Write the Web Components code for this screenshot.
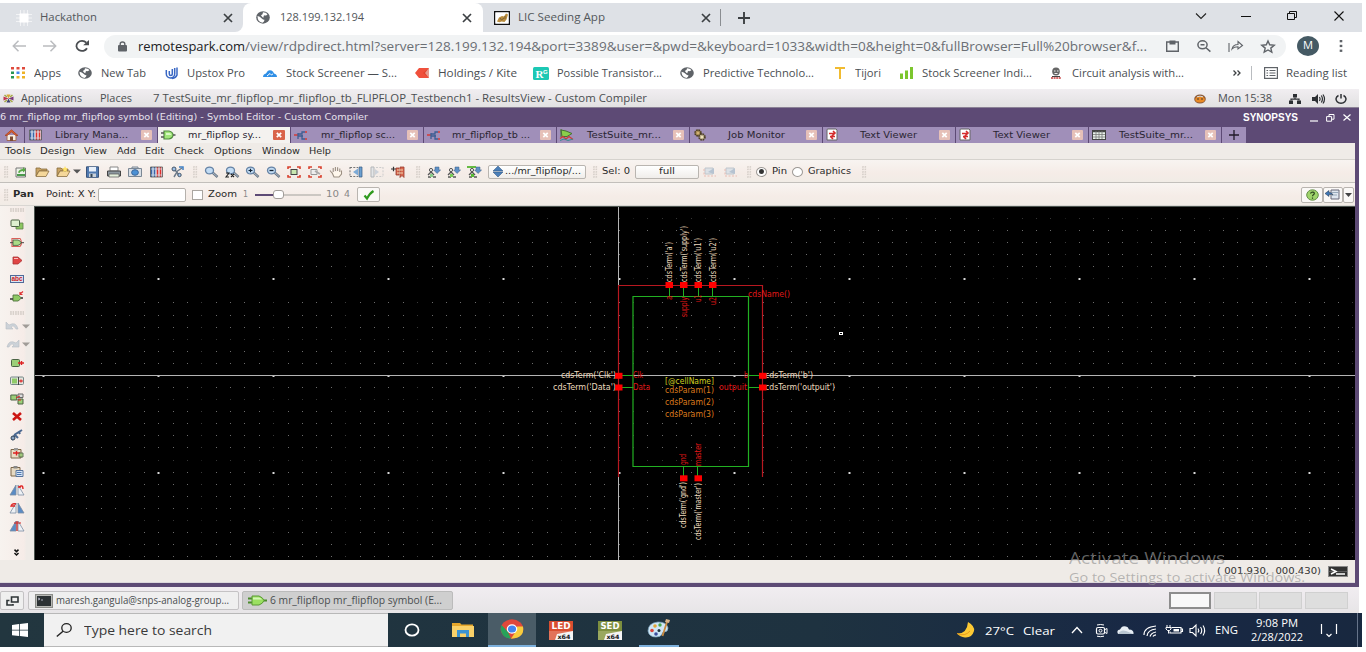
<!DOCTYPE html>
<html lang="en">
<head>
<meta charset="utf-8">
<title>Symbol Editor - Custom Compiler</title>
<style>
html,body{margin:0;padding:0;background:#fff;overflow:hidden}
body{font-family:"Open Sans","Noto Sans",sans-serif}
</style>
</head>
<body>
<remote-desktop></remote-desktop>
<script>
const define = (name, css, html, after) => customElements.define(name, class extends HTMLElement {
  constructor(){ super(); this.attachShadow({mode:'open'}); }
  connectedCallback(){
    this.shadowRoot.innerHTML = `<style>:host{box-sizing:border-box}*{box-sizing:border-box}${css}</style>` + (typeof html === 'function' ? html(this) : html);
    if (after) after(this);
  }
});

/* ---------- icon set ---------- */
const lens = (sign) => `<path d="M8.500 6.500l5 4.500" stroke="#6b7683" stroke-width="2.400"/><path d="M8.500 6.500l4.600 4" stroke="#a9b9ca" stroke-width="1"/><ellipse cx="5.500" cy="4.500" rx="4" ry="3.400" fill="#c3dcf4" stroke="#6683a5" stroke-width="1.300"/>${sign}`;
const scope = (c) => `<path d="M2 9l3-3 3 3M5 6V3M2 11h3M7 11h3" stroke="#555" fill="none" stroke-width="1.300"/><circle cx="5" cy="4" r="1.600" fill="#eee" stroke="#555"/><path d="M4 8h3v3H4z" fill="${c}"/><path d="M9 1h4v3h1.600L11 7.500 7.600 4H9z" fill="#5f90c4" stroke="#3d6088" stroke-width=".5"/>`;
const corners = '<path d="M1 3V1h3M10 1h3v2M13 9v2h-3M4 11H1V9" stroke="#d9412f" stroke-width="1.600" fill="none"/>';
const gate = '<path d="M3 2h5q4 1 4 4t-4 4H3z" fill="#a2e67a" stroke="#4f8a3e" stroke-width="1.200"/><path d="M5 4h3.500q1.500.5 2 2H5z" fill="#d8f8c4"/><path d="M0 4h3M0 8h3M12 6h2.500" stroke="#555" stroke-width="1.300"/>';
const lib = '<rect x="1" y="1" width="12" height="10" fill="#e6eef7"/><path d="M2.500 1v10M5.500 1v10" stroke="#3a66a8" stroke-width="1.700"/><path d="M8.500 1v10M11.500 1v10" stroke="#e0302c" stroke-width="1.700"/><path d="M1 3h12M1 9h12" stroke="#ccd4de" stroke-width=".8"/><path d="M1.500 1h12v10h-12z" fill="none" stroke="#555" stroke-width=".8"/>';
const schem = '<path d="M0 5h4M11 2h2M11 9h2" stroke="#d33b36" stroke-width="1.600"/><path d="M4 3v6M4 4h4V2h3M8 5v4h3M4 6h5" stroke="#3d5f93" fill="none" stroke-width="1.300"/>';
const textdoc = '<path d="M1 1q0-1 1-1h8l1 1v10H1z" fill="#fff" stroke="#666"/><path d="M7 2l2 2-4 4 2 2M3 4.500h6M4 7.500h5" stroke="#d42c2c" stroke-width="1.600" fill="none"/>';
const folder = (p) => `<path d="M1 2h4l1 1h6v2H4L1 10z" fill="#c9a365" stroke="#86693a" stroke-width=".8"/><path d="M1 10.500L4 5h10l-3 5.500z" fill="#f5d79a" stroke="#8b7044" stroke-width=".8"/>${p}`;
const globe = '<circle cx="7" cy="7" r="6.800" fill="#5f6368"/><path d="M1.500 5.500Q4 6 5.500 8t3 1.500q0 2-2 3.200Q1.500 12 1.500 5.500zM7 1.400q3 0 4.500 2.200-1 1.600-2.500 1.200T7.500 6.500 5 5q0-1 1.500-1.600z" fill="#fff"/>';
const box = (c, s) => `<rect x="1.500" y="2.500" width="8" height="7" rx="1" fill="#9ccf78" stroke="#4c6345"/>${s}`;
const tri = (f, a) => `<path d="M6 1v10H0z" fill="${f[0]}" stroke="#7b8ea2" stroke-width=".8"/><path d="M8 1v10h6z" fill="${f[1]}" stroke="#7b8ea2" stroke-width=".8"/>${a}`;
const ICONS = {
 chip:[16,16,'<g fill="#fff"><rect x="3.500" y="3.500" width="9" height="9"/><path d="M4 0h1v16H4zM7.500 0h1v16h-1zM11 0h1v16h-1zM0 4h16v1H0zM0 7.500h16v1H0zM0 11h16v1H0z" opacity=".6"/></g>'],
 globe:[14,12,`<g transform="scale(1 .857)">${globe}</g>`],
 tglobe:[14,13,`<g transform="scale(1 .92)">${globe}</g>`],
 cat:[16,14,'<path d="M.7 0v13.300H16M0 .7h16M15.300 0v13" stroke="#111" stroke-width="1.400"/><path d="M1.400 1.400h13.200v11.200H1.400z" fill="#fff"/><path d="M3 10.500l2-4 3-1.500 2 .5 2-3 2 1-1.500 5-2 2.500-3-.5-2 .8z" fill="#b98c3c"/><path d="M6 7l1.500 2L10 7M11 5v3" stroke="#7b6136" fill="none"/>'],
 x:[10,10,'<path d="M1 1l8 8M9 1L1 9" stroke="#3c4043" stroke-width="1.700"/>'],
 thinx:[10,10,'<path d="M.5 .5l9 9M9.500 .5l-9 9" stroke="#111" stroke-width="1.100"/>'],
 plus:[12,12,'<path d="M6 0v12M0 6h12" stroke="#3c4043" stroke-width="1.900"/>'],
 down:[12,8,'<path d="M1 1.500L6 6.500 11 1.500" stroke="#222" fill="none" stroke-width="1.100"/>'],
 min:[10,10,'<path d="M0 5.500h10" stroke="#111" stroke-width="1"/>'],
 restore:[11,9,'<path d="M.5 2.500h7v6h-7zM2.500 2.500v-2h7v6h-2" stroke="#111" fill="none"/>'],
 back:[14,12,'<path d="M14 6H1.500M6.500 .8L1.300 6l5.200 5.200" stroke="#babcbf" fill="none" stroke-width="1.500"/>'],
 fwd:[14,12,'<path d="M0 6h12.500M7.500 .8L12.700 6l-5.200 5.200" stroke="#babcbf" fill="none" stroke-width="1.500"/>'],
 reload:[14,12,'<path d="M12 8.200A5.600 5 0 1 1 11.300 2.700" stroke="#4a4d51" fill="none" stroke-width="1.800"/><path d="M14 0v5.200H8.200z" fill="#4a4d51"/>'],
 lock:[9,11,'<rect y="4" width="9" height="6.500" rx="1" fill="#5f6368"/><path d="M2.200 5V3a2.300 2 0 0 1 4.600 0v2" stroke="#5f6368" fill="none" stroke-width="1.400"/>'],
 clip:[13,12,'<path d="M.7 2h11.600v9.300H.7z" stroke="#5f6368" fill="none" stroke-width="1.400"/><path d="M3.500 .5h6v4h-6z" fill="#5f6368"/>'],
 zoomout:[14,12,'<ellipse cx="5.500" cy="4.800" rx="4.600" ry="4" stroke="#5f6368" fill="none" stroke-width="1.500"/><path d="M9 7.800l4.400 3.800M3.500 4.800h4" stroke="#5f6368" stroke-width="1.500"/>'],
 share:[16,12,'<path d="M1 3v9M4 9Q5 4.500 10 4.500V1.500L14.500 5.500 10 9V6.800Q6 6.800 4 9z" stroke="#5f6368" fill="none" stroke-width="1.100"/>'],
 star:[14,13,'<path d="M7 1l1.700 3.800 4.500.4-3.400 2.900 1 4L7 10l-3.800 2.100 1-4L.8 5.200l4.500-.4z" stroke="#5f6368" fill="none" stroke-width="1.400"/>'],
 dots:[4,12,'<g fill="#5f6368"><rect x=".7" y="0" width="2.600" height="2.300"/><rect x=".7" y="4.800" width="2.600" height="2.300"/><rect x=".7" y="9.600" width="2.600" height="2.300"/></g>'],
 apps:[14,12,'<path d="M0 0h3v2.500H0zM5.500 0h3v2.500h-3zM11 0h3v2.500h-3z" fill="#df4a3c"/><path d="M0 4.500h3V7H0zM0 9h3v2.500H0z" fill="#2a9553"/><path d="M5.500 4.500h3V7h-3z" fill="#4387ec"/><path d="M11 4.500h3V7h-3zM5.500 9h3v2.500h-3zM11 9h3v2.500h-3z" fill="#eeb326"/>'],
 upstox:[13,12,'<path d="M1.300 3v3.800a4.200 4.200 0 0 0 8.400 0V1M4.300 4v3a1.500 1.500 0 0 0 3 0V2M12 .5v7.500Q11 11 7 11.500" stroke="#3a68c4" fill="none" stroke-width="1.500"/>'],
 bluecloud:[14,9,'<path d="M0 8Q0 5 3 4.500 5 0 8.500 1.500q2 1 2.500 3 3 .5 3 3.500z" fill="#2f8fe6"/><path d="M4 7l3-2.500L8.500 6 10 4.800" stroke="#fff" fill="none"/>'],
 kite:[14,10,'<path d="M4 0h10l-4 5 4 5H4L0 5z" fill="#f0503c"/><path d="M14 0L8 5l6 5" fill="#d13a22" opacity=".5"/>'],
 rg:[16,13,'<rect width="16" height="13" rx="1.500" fill="#1cc8b4"/><text x="2.500" y="11" font-family="Liberation Serif" font-weight="700" font-size="11" fill="#fff">R</text><text x="10" y="6.500" font-family="Liberation Sans" font-weight="700" font-size="6" fill="#fff">G</text>'],
 tj:[10,12,'<path d="M0 0h10v2H6v10H4V2H0z" fill="#f1bb30"/>'],
 bars:[13,12,'<path d="M0 6.500h3V12H0zM5 3.500h3V12H5zM10 0h3v12h-3z" fill="#7cc62e"/>'],
 person:[10,12,'<ellipse cx="5" cy="4.500" rx="3.800" ry="4" fill="#666"/><path d="M3 4h1.500M6 4h1.500M3.500 6.500h3" stroke="#eee"/><path d="M1 9h8v1H1z" fill="#444"/><path d="M0 11h10" stroke="#c63a3a" stroke-width="1.300" stroke-dasharray="2 .6"/>'],
 list:[14,12,'<rect x=".6" y=".6" width="12.800" height="10.800" fill="none" stroke="#5f6368" stroke-width="1.200"/><path d="M2.500 3.500h1.600M2.500 6h1.600M2.500 8.500h1.600M5.500 3.500h6M5.500 6h6M5.500 8.500h6" stroke="#5f6368" stroke-width="1.200"/>'],
 centos:[11,9,'<path d="M5.500 4.500L3.500 .5h4z" fill="#d8a530"/><path d="M5.500 4.500l2 4h-4z" fill="#3c3f6e"/><path d="M5.500 4.500l5-2v4z" fill="#7a3a7c"/><path d="M5.500 4.500l-5-2v4z" fill="#c0354d"/><path d="M1.500 1L4 3M9.500 1L7 3M1.500 8L4 6M9.500 8L7 6" stroke="#a3a845" stroke-width="1.600"/>'],
 orange:[12,10,'<ellipse cx="6" cy="5" rx="5.800" ry="4.600" fill="#8a5b3a"/><ellipse cx="6" cy="5.600" rx="4.800" ry="3" fill="#e98925"/><path d="M3 2.800Q6 1.500 9 2.800" stroke="#ddd"/><circle cx="4" cy="5" r=".8" fill="#333"/><circle cx="8" cy="5" r=".8" fill="#333"/>'],
 net:[12,10,'<path d="M4 0h4v3.500H4zM0 6.500h4V10H0zM8 6.500h4V10H8z" fill="#2c2f33"/><path d="M6 3.500v2M2 6.500V5.200h8v1.300" stroke="#2c2f33" fill="none" stroke-width="1.200"/>'],
 vol:[13,10,'<path d="M0 3h3l3-3v10L3 7H0z" fill="#2c2f33"/><path d="M7.500 3q1.300 2 0 4M9.300 1.500q2.300 3.500 0 7M11 .5q3 4.500 0 9" stroke="#2c2f33" fill="none" stroke-width="1.200"/>'],
 power:[12,10,'<path d="M3.500 1.500a5 4.200 0 1 0 5 0M6 0v4.500" stroke="#2c2f33" fill="none" stroke-width="1.500"/>'],
 wmin:[8,8,'<path d="M0 7h8" stroke="#fff" stroke-width="1.200"/>'],
 wres:[9,8,'<path d="M.6 2.600h5v4.600h-5zM3 2.500v-2h5v4.700H5.600" stroke="#fff" fill="none" stroke-width="1"/>'],
 wx:[8,7,'<path d="M.5 .5l7 6M7.500 .5l-7 6" stroke="#fff" stroke-width="1.200"/>'],
 home:[13,12,'<path d="M2 6v5.500h9V6" fill="#f6ece0" stroke="#a06a52"/><path d="M0 6.500L6.500 .8 13 6.500h-2L6.500 3 2 6.500z" fill="#e0602f" stroke="#a03f20" stroke-width=".7"/><path d="M5 7.500h3V12H5z" fill="#7d4b32"/>'],
 lib:[14,12,lib], gate:[15,12,gate], schem:[14,11,schem], textdoc:[12,12,textdoc],
 wave:[14,12,'<path d="M1 0v8M1 1l5 1 6 2.500-5 3H2z" fill="#8ace4a" stroke="#477034"/><path d="M0 9.500l3-2 3 2.500 3-2.500 4 3" stroke="#d13b33" fill="none" stroke-width="1.300"/><path d="M0 11.500l4-1.500 4 1.500 5-1.500" stroke="#3a8a92" fill="none"/>'],
 gears:[14,12,'<circle cx="5" cy="4" r="2.800" fill="#d0b170" stroke="#4c3c1c" stroke-width="2" stroke-dasharray="1.600 .6"/><circle cx="9" cy="8" r="2.800" fill="#efe2bb" stroke="#4e4028" stroke-width="2" stroke-dasharray="1.600 .6"/>'],
 table:[14,10,'<rect x=".5" y=".5" width="13" height="9" fill="#e8f1ea" stroke="#444"/><path d="M.5 1.500h13" stroke="#444" stroke-width="1.500"/><path d="M4 1v8M7 1v8M10 1v8M1 4.500h12M1 7h12" stroke="#777" stroke-width=".8"/>'],
 newdoc:[12,12,'<path d="M1 2h9.500v9H1z" fill="#eef3ea" stroke="#777"/><path d="M2 8h8v2H2z" fill="#4b9a4b"/><path d="M3 6.500Q4 3 8 3V1l3 3-3 2.500V5Q5 5 4.500 7z" fill="#58a845"/>'],
 open:[15,12,folder('')], openz:[15,12,folder('<path d="M9 0l1 2 2 .4-1.500 1.400L11 6 9 5 7.200 6l.4-2.200L6 2.400 8.200 2z" fill="#ffe36a"/>')],
 caret:[8,5,'<path d="M0 .5h8L4 4.500z" fill="#555"/>'], gcaret:[8,5,'<path d="M0 .5h8L4 4.500z" fill="#a09c98"/>'],
 save:[13,12,'<path d="M.5 .8h12v10.500H.5z" fill="#5079b0" stroke="#3a547b"/><path d="M3 1h7v4.500H3z" fill="#e8f0fa"/><path d="M3 7.500h7V11H3z" fill="#c9d1da"/><path d="M4.500 8h2v3h-2z" fill="#345"/>'],
 print:[14,12,'<path d="M3 1h8v4H3z" fill="#fff" stroke="#888"/><path d="M.5 5h13v5H.5z" fill="#8d979f" stroke="#444"/><path d="M2 8h10v3H2z" fill="#e5f0dc" stroke="#555" stroke-width=".7"/>'],
 cam:[14,12,'<path d="M.5 2.500h13v8H.5zM4 1h6v1.500H4z" fill="#d8dee5" stroke="#7b8794"/><ellipse cx="7" cy="6.500" rx="3.400" ry="2.800" fill="#4b90d4" stroke="#3a659a"/>'],
 prop:[14,12,'<path d="M4 11L7 6 3 3M7 6l2 4M6 6l6-4" stroke="#6d7a89" stroke-width="1.500" fill="none"/><circle cx="4" cy="3" r="2" fill="#9dc0e8" stroke="#456"/><circle cx="9.500" cy="9" r="1.700" fill="#9dc0e8" stroke="#456"/><path d="M9 1h4v3" stroke="#3f7fc4" fill="none" stroke-width="1.500"/>'],
 z1:[14,12,lens('')], z2:[14,12,lens('<path d="M1 7h3l-3 4h3M6 8l3 3M9 8l-3 3" stroke="#222" fill="none" stroke-width="1.100"/>')],
 zin:[14,12,lens('<path d="M3.500 4.500h4M5.500 2.800v3.500" stroke="#123" stroke-width="1.200"/>')], zout:[14,12,lens('<path d="M3.500 4.500h4" stroke="#123" stroke-width="1.300"/>')],
 fit:[14,12,corners+'<rect x="4" y="3.500" width="6" height="5" fill="#c9e8b0" stroke="#444"/>'],
 fits:[14,12,corners+'<path d="M3 3.500h6v5H3z" fill="#eee" stroke="#999"/><path d="M7 5l5 3" stroke="#aaa" stroke-width="1.600"/>'],
 hand:[14,12,'<path d="M3 7L1 4.500M4.200 6V2M6.400 5V1M8.600 5V1.200M10.800 6V2.500M3 6.500l2 4.500h5l2.500-3V4.500" stroke="#9b8f82" fill="#fff7ec" stroke-width="1.100"/>'],
 sel:[14,12,'<path d="M1 1.500h8M1 10.500h8M1 1v10" stroke="#777" stroke-dasharray="2 1.300" fill="none"/><path d="M10 1h3v10h-3z" fill="#6b9fd0" stroke="#375a80" stroke-width=".7"/><path d="M4 6l5-3.500v7z" fill="#7daad6"/>'],
 selg:[14,12,'<path d="M1 1h3v10H1z" fill="#e3e5e7" stroke="#b3b6b9"/><path d="M6 1.500h7M6 10.500h7M13 1v10" stroke="#ccc" stroke-dasharray="2 1.300"/><path d="M9 6L5 3v6z" fill="#ccd2da"/>'],
 book:[14,12,'<path d="M0 3h5M2.500 .8v4.500" stroke="#333" stroke-width="1.200"/><path d="M5 2h3v7H5zM9 1h4v10.500l-2-2-2 2z" fill="#d9674e" stroke="#9b3d30" stroke-width=".8"/><path d="M6 4h6M6 7h6" stroke="#f2d4b0"/>'],
 d1:[14,12,scope('#8c8')], d2:[14,12,scope('#7c5')], d3:[14,12,'<path d="M0 1h9" stroke="#6b4" stroke-width="2"/>'+scope('#5b3')],
 updn:[10,11,'<path d="M0 5L5 0l5 5zM0 6l5 5 5-5z" fill="#4a7fb8" stroke="#2a4f7b" stroke-width=".5"/>'],
 ghost:[14,11,'<path d="M2 2h8v6H2z" fill="#dce1e6" stroke="#c0c6cc"/><path d="M5 6l6-4v6z" fill="#b6c3d1"/><path d="M1 10h12M1 3v7" stroke="#e9bcb2" stroke-dasharray="2 1.500"/>'],
 check:[12,12,'<path d="M1.500 6.500l2.500 3Q7 4 10.500 2" stroke="#2f9a1f" fill="none" stroke-width="2.200"/>'],
 help:[13,12,'<ellipse cx="6.500" cy="6" rx="5.800" ry="5.200" fill="#9fd46b" stroke="#66904b"/><path d="M4.500 4.500Q5 3 6.700 3 9 3.300 8 5.200 6.500 6 6.500 7.300M6.500 8.500v1.300" stroke="#27401c" fill="none" stroke-width="1.200"/>'],
 dock:[15,11,'<path d="M6 1h8v9H6z" fill="#dfe6ef" stroke="#667"/><path d="M7 3.500h6M7 6h5" stroke="#9ab"/><path d="M8 6Q7 3 4 3.500V1.500L0 4.500l4 3V5.500Q7 5 8 6z" fill="#3f76b4" stroke="#234" stroke-width=".5"/>'],
 s1:[14,11,'<path d="M6 4h7v6H6z" fill="#8cc661" stroke="#61824f" stroke-width=".8"/><rect x="1" y="1" width="8.500" height="6.500" rx="1" fill="#def0cf" stroke="#4c6345"/>'],
 s2:[14,11,'<path d="M2 1.500h8q3 4 0 8H2z" fill="none" stroke="#d9605a" stroke-width="1.200"/><path d="M0 5.700h3M11 5.700h3" stroke="#444"/><path d="M3 3h5q3 1 3 2.700T8 8.400H3z" stroke="#4c6345" fill="#a9dc86" stroke-width=".9"/>'],
 s3:[12,9,'<path d="M2 1h5l4 3.500L7 8H2z" fill="#e04545" stroke="#a33" stroke-width=".8"/><path d="M3 2.500h4" stroke="#fbb"/>'],
 s4:[14,8,'<rect x=".5" y=".5" width="13" height="7" fill="#dbe6f3" stroke="#4f6a98"/><text x="1.500" y="6.200" font-family="Liberation Sans" font-weight="700" font-size="6.500" fill="#c22">abc</text>'],
 s5:[14,11,'<path d="M3 4h5q3 2 3 3t-3 3H3z" fill="#8fc965" stroke="#51723f" stroke-width=".9"/><path d="M0 8h3M11 7h2" stroke="#333" stroke-width="1.300"/><path d="M9.500 3.500l3.500-3M10 1v2.500h2.500" stroke="#d33" stroke-width="1.200"/>'],
 undo:[13,9,'<path d="M0 0v7h7L5 5q3-2.500 5 2l2 0Q10-1 3 3z" fill="#ccd2d8" stroke="#b7bec5" stroke-width=".6"/>'],
 redo:[13,9,'<path d="M13 0v7H6l2-2Q5 2.500 3 7L1 7Q3-1 10 3z" fill="#ccd2d8" stroke="#b7bec5" stroke-width=".6"/>'],
 move:[14,11,box('','<path d="M8 6h6M11.500 4v4" stroke="#d22" stroke-width="1.400"/>')],
 stretch:[14,11,'<rect x=".5" y="2" width="13" height="7.500" rx="1" fill="#e2e5dd" stroke="#788"/><path d="M2 3.500h5v5H2z" fill="#8fca68"/><path d="M8.500 2v8" stroke="#444"/><path d="M9 6h4M11 4.500v3" stroke="#d22" stroke-width="1.200"/>'],
 copy:[14,12,'<path d="M.8 2h6v5h-6zM8 6h5v5H8z" fill="#9ccf78" stroke="#4c6345"/><path d="M8 1h5v3.500H8z" fill="#ddd" stroke="#666"/><path d="M6 5l4-2M8 7l3 0" stroke="#d22"/>'],
 del:[12,9,'<path d="M2 1l8 7M10 1L2 8" stroke="#cc1512" stroke-width="2.600"/>'],
 pick:[13,12,'<path d="M2 11L5 5.500 12 1M5 6l3 3M9 3l1 2" stroke="#4a6890" stroke-width="2" fill="none"/><circle cx="3" cy="9" r="2" fill="#89a3c4" stroke="#345"/>'],
 paste1:[14,12,'<path d="M1 2.500h10v8.500H1z" fill="#e9ddc6" stroke="#7c6748"/><path d="M4 1h4v2.500H4z" fill="#999"/><path d="M3 6h7M6.500 4v4.500" stroke="#d22" stroke-width="1.400"/><path d="M9 6h4v4H9z" fill="#9ccf78" stroke="#4c6345" opacity=".85"/>'],
 paste2:[14,12,'<path d="M1 2.500h9v8.500H1z" fill="#e6d9c2" stroke="#7c6748"/><path d="M3.500 1h4v2.500h-4z" fill="#888"/><path d="M6 5.500h7v6H6z" fill="#d5e4f5" stroke="#57749c"/><path d="M7 7.500h4.500M7 9.500h4.500" stroke="#4e78b2"/>'],
 rot1:[14,11,tri(['#5a8bc5','#eef1f5'],'<path d="M9 3q4-3 4 2M8 3h3" stroke="#d22" fill="none" stroke-width="1.400"/>')],
 rot2:[14,11,tri(['#eef1f5','#5a8bc5'],'<path d="M1 5q0-4 5-3M2 4h3" stroke="#d22" fill="none" stroke-width="1.400"/>')],
 mirror:[14,12,tri(['#5a8bc5','#eef1f5'],'<path d="M4 3h7M7 1v10" stroke="#c22" stroke-width="1.200"/>')],
 more:[5,7,'<path d="M.5 .6L2.500 2.600l2-2M.5 4L2.500 6l2-2" stroke="#111" fill="none" stroke-width="1.500"/>'],
 term:[20,11,'<rect x=".5" y=".5" width="19" height="10" fill="#333" stroke="#8a8a8a"/><path d="M.5 5.500h19" stroke="#777" stroke-width=".6"/><path d="M3 3l5 2.500L3 8M8 8h9" stroke="#fff" fill="none" stroke-width="1.500"/>'],
 wins:[13,10,'<path d="M5.500 1H12v5H5.500z" fill="none" stroke="#2e3436" stroke-width="1.600"/><path d="M3.500 4.500H1V9h6V8" fill="none" stroke="#2e3436" stroke-width="1.600"/>'],
 gterm:[18,14,'<rect x=".5" y=".5" width="17" height="13" fill="#b8b9b5" stroke="#8c8d89"/><rect x="2" y="2" width="14" height="10" fill="#2c3234"/><path d="M3 4l2 1-2 1M6 6h2" stroke="#ccd" fill="none" stroke-width=".8"/>'],
 biggate:[20,11,'<path d="M0 3.500h5M0 7.500h5M14 5.500h5" stroke="#4b8b2c" stroke-width="1.900"/><path d="M4 1h7q4 1.500 5 4.500-1 3-5 4.500H4z" fill="#9be062" stroke="#5a9a35"/><path d="M5 2.500h6q2 .7 3 2H5z" fill="#d4f7b5"/>'],
 win:[16,14,'<path d="M0 2l7-1v5.700H0zM7.800 .9L16 0v6.700H7.800zM0 7.500h7v5.600L0 12.200zM7.800 7.500H16V14l-8.200-.9z" fill="#fff"/>'],
 find:[16,14,'<ellipse cx="10.500" cy="5" rx="4.700" ry="4.300" stroke="#222" fill="none" stroke-width="1.300"/><path d="M7 8.200L.8 13.500" stroke="#222" stroke-width="1.400"/>'],
 cortana:[16,14,'<ellipse cx="8" cy="7" rx="6.500" ry="5.700" stroke="#fff" fill="none" stroke-width="1.800"/>'],
 explorer:[22,16,'<path d="M0 1h8l1.500 1.500H21V15H0z" fill="#e6a72c"/><path d="M0 4h22v11H0z" fill="#fad169"/><path d="M5 8h12v7h-3v-3.500H8V15H5z" fill="#3c93d2"/>'],
 chrome:[24,20,'<ellipse cx="12" cy="10" rx="11.300" ry="9.700" fill="#e0483a"/><path d="M1.500 6L8 13l3 6.700Q2 19 .8 11q-.2-3 .7-5z" fill="#27a25a"/><path d="M11 19.700L16 12l1-4.500h6Q25 19 11 19.700z" fill="#f8cc3d"/><ellipse cx="12" cy="10" rx="5.300" ry="4.700" fill="#fff"/><ellipse cx="12" cy="10" rx="4.100" ry="3.600" fill="#4484ee"/>'],
 led:[24,19,'<rect width="24" height="19" fill="#f5f5f5"/><rect width="24" height="10" fill="#d84e30"/><path d="M0 10h24L8 13 6 19H0z" fill="#e2735a"/><text x="2.500" y="8" textLength="19" lengthAdjust="spacingAndGlyphs" font-family="DejaVu Sans" font-weight="700" font-size="8" fill="#fff">LED</text><text x="8.500" y="18" textLength="13" lengthAdjust="spacingAndGlyphs" font-family="DejaVu Sans" font-weight="700" font-size="6" fill="#111">x64</text>'],
 sed:[24,19,'<rect width="24" height="19" fill="#f5f5f5"/><rect width="24" height="10" fill="#7d8f3f"/><path d="M0 10h24L8 13 6 19H0z" fill="#9aa85f"/><text x="2.500" y="8" textLength="19" lengthAdjust="spacingAndGlyphs" font-family="DejaVu Sans" font-weight="700" font-size="8" fill="#fff">SED</text><text x="8.500" y="18" textLength="13" lengthAdjust="spacingAndGlyphs" font-family="DejaVu Sans" font-weight="700" font-size="6" fill="#111">x64</text>'],
 paint:[24,20,'<path d="M1 12Q1 4 11 3q9 0 10 6 0 4-4 4-2 .5-2 2-1 3-6 3-7 0-8-6z" fill="#cfe6f5" stroke="#7fa9c4" stroke-width=".7"/><circle cx="5" cy="11.500" r="1.800" fill="#d9453c"/><circle cx="8" cy="7" r="1.800" fill="#e2a436"/><circle cx="13" cy="6" r="1.700" fill="#4aa64f"/><circle cx="9" cy="15" r="1.800" fill="#3b4d9c"/><circle cx="12" cy="11.500" r="1.500" fill="#22343f"/><path d="M20 3L15.500 17" stroke="#c8893f" stroke-width="1.800"/><path d="M18 3l1-3 4 1-1 3z" fill="#d9b58c"/>'],
 moon:[18,16,'<path d="M11 0q7 4 6 9-2 7-9 6.500-5-.5-8-4Q10 12 11 0z" fill="#fcc934"/><path d="M0 11.500Q8 15 13 9" stroke="#e79a1b" fill="none"/>'],
 up:[12,8,'<path d="M1 7L6 1.500 11 7" stroke="#fff" fill="none" stroke-width="1.300"/>'],
 meet:[13,13,'<rect x="1.500" y="3.500" width="8" height="6.500" rx="1.500" stroke="#fff" fill="none" stroke-width="1.200"/><ellipse cx="5.500" cy="6.700" rx="1.500" ry="1.400" stroke="#fff" fill="none"/><path d="M10 5.500l2-1v5l-2-1M2 1q3.500-1 7 0M2 12.200q3.500 1 7 0" stroke="#fff" fill="none"/>'],
 wcloud:[17,10,'<path d="M1 9Q-1 5 3 4.500 5 0 9 1.500q2 0 3 3 5 0 4.500 4.500z" fill="#e8eef4"/><path d="M1 9q3-5 8-3t7.500 3z" fill="#b9c6d2"/>'],
 wifi:[14,13,'<path d="M1 11Q1 3 13 2M4 12Q4.500 6 13 5M7 12.500Q8 9 13 8M10 12.500q.5-1.500 3-1.700" stroke="#fff" fill="none" stroke-width="1.200"/>'],
 batt:[17,10,'<path d="M5.500 2.500H15V8H4V6.500M15 4h1.500v2.500H15" stroke="#fff" fill="none" stroke-width="1.100"/><path d="M7.500 4H13v2.500H7.500z" fill="#fff"/><path d="M1 0v2M4 0v2M0 2.500h5v1.500L3.500 5.500H1.500L0 4zM2.500 6v2.500" stroke="#fff" fill="none"/>'],
 wvol:[17,13,'<path d="M1 4.500h2.500L7 1v11L3.500 8.500H1z" stroke="#fff" fill="none" stroke-width="1.100"/><path d="M9 4.500q1.500 2 0 4M11.500 3q2.500 3.500 0 7M14 1.500q3.300 5 0 10" stroke="#fff" fill="none" stroke-width="1.100"/>'],
 notif:[18,13,'<path d="M1.500 0v10M16.500 0v10M6.500 10l2.500 2.500L11.500 10" stroke="#fff" fill="none" stroke-width="1.200"/>'],
 tclose:[11,10,'<rect width="11" height="10" rx="1" fill="#e6c0b8"/><path d="M3.300 2.800l4.400 4.400M7.700 2.800L3.300 7.200" stroke="#fff" stroke-width="1.700"/>'],
 tcloseon:[12,10,'<rect width="12" height="10" rx="1" fill="#d9644a"/><path d="M3.800 2.800l4.400 4.400M8.200 2.800L3.800 7.200" stroke="#fff" stroke-width="1.700"/>'],
 dbl:[8,6,'<path d="M.5 .5L3 3 .5 5.500M4.500 .5L7 3 4.500 5.500" stroke="#3c4043" fill="none" stroke-width="1.300"/>'],
};

/* one glyph from the set; m is the space before it */
define('ui-icon', ':host{display:block;flex:none}svg{display:block;overflow:visible}', el => {
  const [w,h,body] = ICONS[el.getAttribute('name')];
  el.style.marginLeft = (el.getAttribute('m') || 0) + 'px';
  return `<svg width="${w}" height="${h}" viewBox="0 0 ${w} ${h}" fill="none">${body}</svg>`;
});
/* a label stretched to a fixed advance width */
define('fit-text', ':host{display:block;flex:none;white-space:pre;line-height:1.3;overflow:visible}span{display:inline-block;transform-origin:0 50%}', '<span><slot></slot></span>', el => {
  const w = +el.getAttribute('w'), s = el.getAttribute('s');
  if (s) el.style.fontSize = s + 'px';
  el.style.marginLeft = (el.getAttribute('m') || 0) + 'px';
  el.style.width = w + 'px';
  const span = el.shadowRoot.querySelector('span');
  span.style.transform = `scaleX(${w / span.getBoundingClientRect().width})`;
});
const T = (m,w,s,text,st='') => `<fit-text m="${m}" w="${w}" s="${s}"${st?` style="${st}"`:''}>${text}</fit-text>`;
const I = (m,name) => `<ui-icon m="${m}" name="${name}"></ui-icon>`;

/* ---------- browser ---------- */
define('browser-tabs', `:host{display:flex;height:29px;width:1362px;background:#dee1e6;color:#53575b}
 .tab{display:flex;align-items:center;height:29px;flex:none}
 .a{width:243px;border-radius:0 0 8px 0;background:#dee1e6}.b{width:240px;background:#fff;border-radius:8px 8px 0 0}.c{width:238px;border-right:1px solid #8a8d91}
 .c{height:17px;margin-top:6px}.l{width:243px;background:#fff;flex:none}.ctl{display:flex;align-items:center;height:25px;margin-left:445px}`,
 `<div class="l"><div class="tab a">${I(16,'chip')}${T(8,57,11.5,'Hackathon')}${I(126,'x')}</div></div>
  <div class="tab b">${I(13,'tglobe')}${T(10,84,11.5,'128.199.132.194')}${I(98,'x')}</div>
  <div class="tab c">${I(11,'cat')}${T(8,87,11.5,'LIC Seeding App')}${I(96,'x')}</div>
  <div class="tab">${I(17,'plus')}</div>
  <div class="ctl">${I(0,'down')}${I(34,'min')}${I(36,'restore')}${I(36,'thinx')}</div>`);
define('address-bar', `:host{display:flex;align-items:center;height:28px}
 .pill{display:flex;align-items:center;width:1182px;height:23px;margin-left:15px;border-radius:12px;background:#f1f3f4;color:#6b6f74}
 .av{width:22px;height:20px;border-radius:50%;background:#455a64;color:#fff;margin-left:11px;display:flex;align-items:center}`,
 `${I(12,'back')}${I(17,'fwd')}${I(18,'reload')}<div class="pill">${I(14,'lock')}${T(11,107,13,'remotespark.com','color:#202124')}${T(0,902,13,'/view/rdpdirect.html?server=128.199.132.194&amp;port=3389&amp;user=&amp;pwd=&amp;keyboard=1033&amp;width=0&amp;height=0&amp;fullBrowser=Full%20browser&amp;f...')}${I(19,'clip')}${I(18,'zoomout')}${I(17,'share')}${I(17,'star')}</div><div class="av">${T(6,10,10.5,'M')}</div>${I(20,'dots')}`);
define('bookmarks-bar', `:host{display:flex;align-items:center;height:29px;padding-bottom:3px;color:#4a4e52}i{width:1px;height:14px;background:#b9bcc0;margin-left:10px}`,
 `${I(11,'apps')}${T(9,27,11.3,'Apps')}${I(17,'globe')}${T(9,45,11.3,'New Tab')}${I(19,'upstox')}${T(9,58,11.3,'Upstox Pro')}${I(18,'bluecloud')}${T(9,111,11.3,'Stock Screener — S...')}${I(18,'kite')}${T(9,79,11.3,'Holdings / Kite')}${I(16,'rg')}${T(8,105,11.3,'Possible Transistor...')}${I(18,'globe')}${T(9,111,11.3,'Predictive Technolo...')}${I(21,'tj')}${T(10,26,11.3,'Tijori')}${I(19,'bars')}${T(9,110,11.3,'Stock Screener Indi...')}${I(19,'person')}${T(11,112,11.3,'Circuit analysis with...')}${I(49,'dbl')}<i></i>${I(12,'list')}${T(8,61,11.3,'Reading list')}`);

/* ---------- remote desktop ---------- */
define('desktop-panel', `:host{display:flex;align-items:center;height:18px;width:1359px;padding-top:1px;background:linear-gradient(#f1eef1,#e2e1e2);color:#4a4e51}`,
 `${I(3,'centos')}${T(7,61,10.5,'Applications')}${T(18,32,10.5,'Places')}${T(21,494,10.5,'7 TestSuite_mr_flipflop_mr_flipflop_tb_FLIPFLOP_Testbench1 - ResultsView - Custom Compiler')}${I(547,'orange')}${T(12,54,10.5,'Mon 15:38')}${I(17,'net')}${I(11,'vol')}${I(10,'power')}`);
define('editor-title', `:host{display:flex;align-items:center;height:19px;color:#e6e1ec}`,
 `${T(0,368,9.5,'6 mr_flipflop mr_flipflop symbol (Editing) - Symbol Editor - Custom Compiler')}${T(875,55,11.5,'SYNOPSYS','color:#fff;font-family:Liberation Sans,sans-serif;font-weight:700')}${I(12,'wmin')}${I(8,'wres')}${I(8,'wx')}`);
define('editor-tab', `:host{display:flex;align-items:center;width:133px;height:16px;flex:none;background:#a08fb9;border-left:1px solid #5d4a75;color:#2a2532;padding:0 5px 0 3px}
 :host([on]){background:#f4f2ef}.t{flex:1;display:flex;justify-content:center}`,
 el => `${I(0,el.getAttribute('icon'))}<div class="t">${T(0,el.getAttribute('w'),9.5,el.getAttribute('label'))}</div>${I(0,el.hasAttribute('on')?'tcloseon':'tclose')}`);
const tab = (i,w,l,on='') => `<editor-tab icon="${i}" w="${w}" label="${l}" ${on}></editor-tab>`;
define('editor-tabs', `:host{display:flex;height:16px}.h{width:24px;background:#a08fb9;display:flex;align-items:center}.p{width:25px;background:#a08fb9;border-left:1px solid #5d4a75;display:flex;align-items:center}`,
 `<div class="h">${I(5,'home')}</div>${tab('lib',73,'Library Mana...')}${tab('gate',73,'mr_flipflop sy...','on')}${tab('schem',74,'mr_flipflop sc...')}${tab('schem',78,'mr_flipflop_tb ...')}${tab('wave',74,'TestSuite_mr...')}${tab('gears',57,'Job Monitor')}${tab('textdoc',57,'Text Viewer')}${tab('textdoc',57,'Text Viewer')}${tab('table',74,'TestSuite_mr...')}<div class="p"><svg width="12" height="10" style="margin-left:6px"><path d="M6 0v10M1 5h10" stroke="#201a28" stroke-width="1.300"/></svg></div>`);
define('menu-bar', `:host{display:flex;align-items:center;height:17px;background:#efebe7;border-bottom:1px solid #d5d2cd;color:#2a2a2a}`,
 `${[[5,26,'Tools'],[9,35,'Design'],[9,23,'View'],[10,19,'Add'],[9,19,'Edit'],[10,30,'Check'],[10,38,'Options'],[10,38,'Window'],[9,22,'Help']].map(a=>T(a[0],a[1],9.5,a[2])).join('')}`);
define('drag-grip', `:host{display:block;flex:none;width:5px;height:12px;background:radial-gradient(circle at 1px 1px,#d6cfc9 .7px,transparent 1px) 0 0/2.5px 2.5px}`,
 el => { el.style.marginLeft = (el.getAttribute('m')||0)+'px'; return ''; });
const G = m => `<drag-grip m="${m}"></drag-grip>`;
const bar = 'background:linear-gradient(#f8f4f1,#f5ece7 60%,#f1ece6);color:#2a2a2a;';
define('tool-bar', `:host{display:flex;align-items:center;height:23px;padding-top:1px;${bar}border-bottom:1px solid #c2bfbb}
 .b{display:flex;align-items:center;height:14px;border:1px solid #b9b5b0;border-radius:2px;background:linear-gradient(#fff,#f0edea)}
 .r{width:11px;height:10px;border:1px solid #9c9894;border-radius:50%;background:#fff;display:grid;place-items:center}.r b{width:5px;height:5px;border-radius:50%;background:#333}`,
 `${G(4)}${I(6,'newdoc')}${I(8,'open')}${I(6,'openz')}${I(2,'caret')}${I(5,'save')}${I(8,'print')}${I(7,'cam')}${I(7,'lib')}${I(7,'prop')}${G(9)}${I(6,'z1')}${I(7,'z2')}${I(6,'zin')}${I(7,'zout')}${I(7,'fit')}${I(7,'fits')}${I(7,'hand')}${I(6,'sel')}${I(7,'selg')}${I(7,'book')}${G(11)}${I(5,'d1')}${I(6,'d2')}${I(7,'d3')}
 <div class="b" style="width:98px;margin-left:7px">${I(4,'updn')}${T(2,76,9.5,'.../mr_flipflop/...')}</div>${G(7)}${T(4,28,9.5,'Sel: 0')}<div class="b" style="width:64px;margin-left:5px">${T(23,16,9.5,'full')}</div>${I(4,'ghost')}${I(7,'ghost')}${G(9)}<div class="r" style="margin-left:4px"><b></b></div>${T(5,15,9.5,'Pin')}<div class="r" style="margin-left:5px"></div>${T(5,43,9.5,'Graphics')}${G(11)}`);
define('point-bar', `:host{display:flex;align-items:center;height:23px;padding-top:1px;${bar}border-bottom:1px solid #d9d6d2}
 .in{width:88px;height:14px;border:1px solid #b5b1ac;border-radius:2px;background:#fff;margin-left:2px}.cb{width:11px;height:10px;border:1px solid #aaa6a1;background:#fff;margin-left:6px}
 .sl{display:flex;align-items:center;width:66px;height:2px;background:#cbc7c2;margin-left:7px}.sl i{width:18px;height:2px;background:#5d4a75}.sl b{width:11px;height:9px;border:1px solid #a19d99;border-radius:3px;background:#fff}
 .ok,.q,.d,.e{display:flex;align-items:center;height:16px;border:1px solid #b9b5b0;border-radius:2px;background:#fbf9f7}.ok{width:23px;margin-left:7px;height:15px}.q{width:22px;margin-left:921px}.d{width:20px}.e{width:11px}`,
 `${G(4)}${T(4,21,9.5,'Pan','font-weight:700')}${T(12,50,9.5,'Point: X Y:')}<div class="in"></div><div class="cb"></div>${T(5,29,9.5,'Zoom')}${T(6,5,9.5,'1','color:#888')}<div class="sl"><i></i><b></b></div>${T(5,13,9.5,'10','color:#888')}${T(5,6,9.5,'4','color:#888')}<div class="ok">${I(5,'check')}</div><div class="q">${I(4,'help')}</div><div class="d">${I(1,'dock')}</div><div class="e"><svg width="7" height="4" style="margin-left:1px"><path d="M0 0h7L3.500 4z" fill="#444"/></svg></div>`);
define('side-palette', `:host{display:flex;flex-direction:column;align-items:center;width:34px;height:354px;padding-right:1px;background:linear-gradient(90deg,#f7f3ef,#f6ece8 70%,#efebe7 78%)}
 .i{height:18.2px;display:flex;align-items:center;justify-content:center;flex:none}.g{width:14px;height:4px;background:radial-gradient(circle at 1px 1px,#d6cfc9 .7px,transparent 1px) 0 0/2.5px 2px;flex:none}.u{padding-left:8px;margin-left:-3px}`,
 `<div class="g" style="margin:2px 0 3px"></div>${['s1','s2','s3','s4','s5'].map(n=>`<div class="i">${I(0,n)}</div>`).join('')}<div class="g" style="margin:5px 0 2px"></div>
 ${['undo','redo'].map(n=>`<div class="i u">${I(-2,n)}${I(3,'gcaret')}</div>`).join('')}${['move','stretch','copy','del','pick','paste1','paste2','rot1','rot2','mirror'].map(n=>`<div class="i" style="margin-bottom:-.05px">${I(0,n)}</div>`).join('')}<div class="i" style="margin-top:9px">${I(0,'more')}</div>`);

/* schematic symbol; drawing units are window pixels */
define('symbol-canvas', `:host{display:block;width:1321px;height:354px;background:#000}svg{display:block;overflow:visible}text{font-family:"DejaVu Sans",sans-serif}`, () => {
  let dots = '', major = '';
  for (let i=0;i<92;i++) for (let j=-6;j<24;j++){
    const x = Math.round(43+i*14.39), y = Math.round(278.3+j*12.08);
    if (j===1||x<36||x>1353||y<207||y>558) continue;
    if (i%8===0 && j%8===0) major += `M${x-.5} ${y}h2v2h-2z`;
    else dots += `<path d="M${x} ${y}h1v1h-1z" opacity="${(i%5===1?.4:.75)*(j%5===0?.5:1)}"/>`;
  }
  const t = (x,y,w,c,s) => `<text x="${x}" y="${y+2.500}" textLength="${w}" lengthAdjust="spacingAndGlyphs" font-size="8" fill="${c}">${s}</text>`;
  const v = (x,y,w,c,s) => `<text transform="translate(${x+3} ${y}) rotate(-90)" textLength="${w}" lengthAdjust="spacingAndGlyphs" font-size="9" fill="${c}">${s}</text>`;
  const W='#ecd9bd', R='#e01818', O='#dd7a1c';
  const pin = (x,y) => `<rect x="${x-3.500}" y="${y-3}" width="7.500" height="6" fill="#f00"/>`;
  return `<svg width="1321" height="354" viewBox="34 206 1321 354"><g fill="#909090">${dots}</g><path d="${major}" fill="#d8d8d8"/>
  <path d="M34 375.500H1355M618.500 206V285M618.500 477V560" stroke="#b4b4b4"/><path d="M34 206.500H1355M34.500 206V560" stroke="#4c5550" stroke-width="1"/>
  <path d="M618.500 477V285.500H762.500V477" stroke="#b81820" fill="none" stroke-width="1.200"/><path d="M633 296.500H748.500V466.500H633z" stroke="#22b022" fill="none" stroke-width="1.200"/>
  <path d="M669.500 285v11M683.500 285v11M698.500 285v11M712.500 285v11M683.500 466v11M697.500 466v11M619 375.500h14M619 387.500h14M749 375.500h14M749 387.500h14" stroke="#22b022"/>
  ${v(669,282,40,W,"cdsTerm('a')")}${v(683.5,282,56,W,"cdsTerm('supply')")}${v(698,282,44,W,"cdsTerm('u1')")}${v(712.5,282,44,W,"cdsTerm('u2')")}
  ${v(669,300,4.5,R,'a')}${v(684,317,20,R,'supply')}${v(698,302,7,R,'u1')}${v(712.5,305,8,R,'u2')}
  ${t(561,375.5,55,W,"cdsTerm('Clk')")}${t(553,387.5,63,W,"cdsTerm('Data')")}${t(633,375.5,10,R,'Clk')}${t(633,387.5,17,R,'Data')}
  ${t(744,375.5,4,R,'b')}${t(719,387.5,28,R,'outpuit')}${t(765,375.5,48,W,"cdsTerm('b')")}${t(765,387.5,70,W,"cdsTerm('outpuit')")}
  ${t(748,294,42,R,'cdsName()')}${t(665,381,49,'#cfcf20','[@cellName]')}${t(665,390.5,49,O,'cdsParam(1)')}${t(665,402.3,49,O,'cdsParam(2)')}${t(665,414,49,O,'cdsParam(3)')}
  ${v(683,465,11,R,'gnd')}${v(698,466,23,R,'master')}${v(683,528,46,W,"cdsTerm('gnd')")}${v(698,540,57,W,"cdsTerm('master')")}
  ${[669,683.5,698,712.5].map(x=>pin(x,285)).join('')}${[683.5,698].map(x=>pin(x,478.3)).join('')}${[375.8,387.5].map(y=>pin(618.5,y)+pin(762.5,y)).join('')}
  <rect x="839.500" y="332.500" width="3" height="2" fill="none" stroke="#fff"/></svg>`;
});
define('status-bar', `:host{display:flex;align-items:center;height:23px;padding-top:1px;background:#efebe7;color:#333;border-bottom:1px solid #dcd8dc}`,
 `${T(1217,104,9,'( 001.930,  000.430)')}${I(7,'term')}`);
define('symbol-editor', `:host{display:block;width:1359px;height:480px;background:#5d4a75;border-top:1px solid #8b8296;font-family:"DejaVu Sans",sans-serif}.c{width:1355px}.m{display:flex}`,
 `<editor-title></editor-title><editor-tabs></editor-tabs><div class="c"><menu-bar></menu-bar><tool-bar></tool-bar><point-bar></point-bar><div class="m"><side-palette></side-palette><symbol-canvas></symbol-canvas></div><status-bar></status-bar></div>`);
define('window-list', `:host{display:flex;align-items:center;width:1359px;height:26px;padding-top:1px;background:linear-gradient(#f1edf1,#e7e5e7);color:#4a4e50}
 .b{display:flex;align-items:center;height:19px;border:1px solid #c4c2c4;border-radius:2px;background:#efefef}.on{background:#cfcfcf;border-color:#bbb}
 .p{height:17px;width:43px;border:1px solid #d0d0d0;background:#dedede;margin-left:2.500px}.p.f{width:42px;border:2px solid #8d8d8d;background:#f8f8f8;margin-left:716px}`,
 `<div class="b" style="width:24px">${I(5,'wins')}</div><div class="b" style="width:211px;margin-left:4px">${I(6,'gterm')}${T(3,173,10.5,'maresh.gangula@snps-analog-group...')}</div><div class="b on" style="width:211px;margin-left:3px">${I(5,'biggate')}${T(2,172,10.5,'6 mr_flipflop mr_flipflop symbol (E...')}</div><div class="p f"></div><div class="p"></div><div class="p"></div><div class="p"></div>`);

/* ---------- host taskbar ---------- */
define('host-taskbar', `:host{display:flex;align-items:center;width:1362px;height:34px;background:linear-gradient(90deg,#22363f,#1e3240 60%,#182845 85%,#18283f);color:#fff}
 .s{display:flex;align-items:center;width:344px;height:34px;margin-left:16px;background:#f1f1f1;color:#3a3a3a;border:solid #b8b8b8;border-width:1px 0}
 .a{height:34px;display:flex;align-items:center}.ch{width:48px;margin-left:14px;background:#4a5c67;border-bottom:2px solid #7db0dc}.pt{width:40px;margin-left:17px;border-bottom:2px solid #7db0dc}.k{margin-left:13px;width:52px;display:flex;flex-direction:column}.e{width:1px;height:34px;background:#66748a;margin-left:19px}`,
 `${I(12,'win')}<div class="s">${I(12,'find')}${T(12,128,13,'Type here to search')}</div>${I(16,'cortana')}${I(32,'explorer')}<div class="a ch">${I(12,'chrome')}</div>${I(13,'led')}${I(25,'sed')}<div class="a pt">${I(8,'paint')}</div>${I(278,'moon')}${T(10,29,11.5,'27°C','padding-top:2px')}${T(9,32,11.5,'Clear','padding-top:2px')}${I(16,'up')}${I(12,'meet')}${I(9,'wcloud')}${I(9,'wifi')}${I(9,'batt')}${I(6,'wvol')}${T(9,23,11.5,'ENG')}<div class="k">${T(5,42,11,'9:08 PM')}${T(0,52,11,'2/28/2022')}</div>${I(17,'notif')}<i class="e"></i>`);
define('activation-note', `:host{position:absolute;left:1069px;top:547px;color:rgba(150,150,150,.66)}`,
 `${T(0,156,17,'Activate Windows')}${T(0,236,12.500,'Go to Settings to activate Windows.','padding-top:1px')}`);
define('remote-desktop', `:host{display:block;position:relative;width:1366px;height:652px;padding-top:3px;background:#fff}`,
 `<browser-tabs></browser-tabs><address-bar></address-bar><bookmarks-bar></bookmarks-bar><desktop-panel></desktop-panel><symbol-editor></symbol-editor><window-list></window-list><host-taskbar></host-taskbar><activation-note></activation-note>`);
</script>
</body>
</html>
